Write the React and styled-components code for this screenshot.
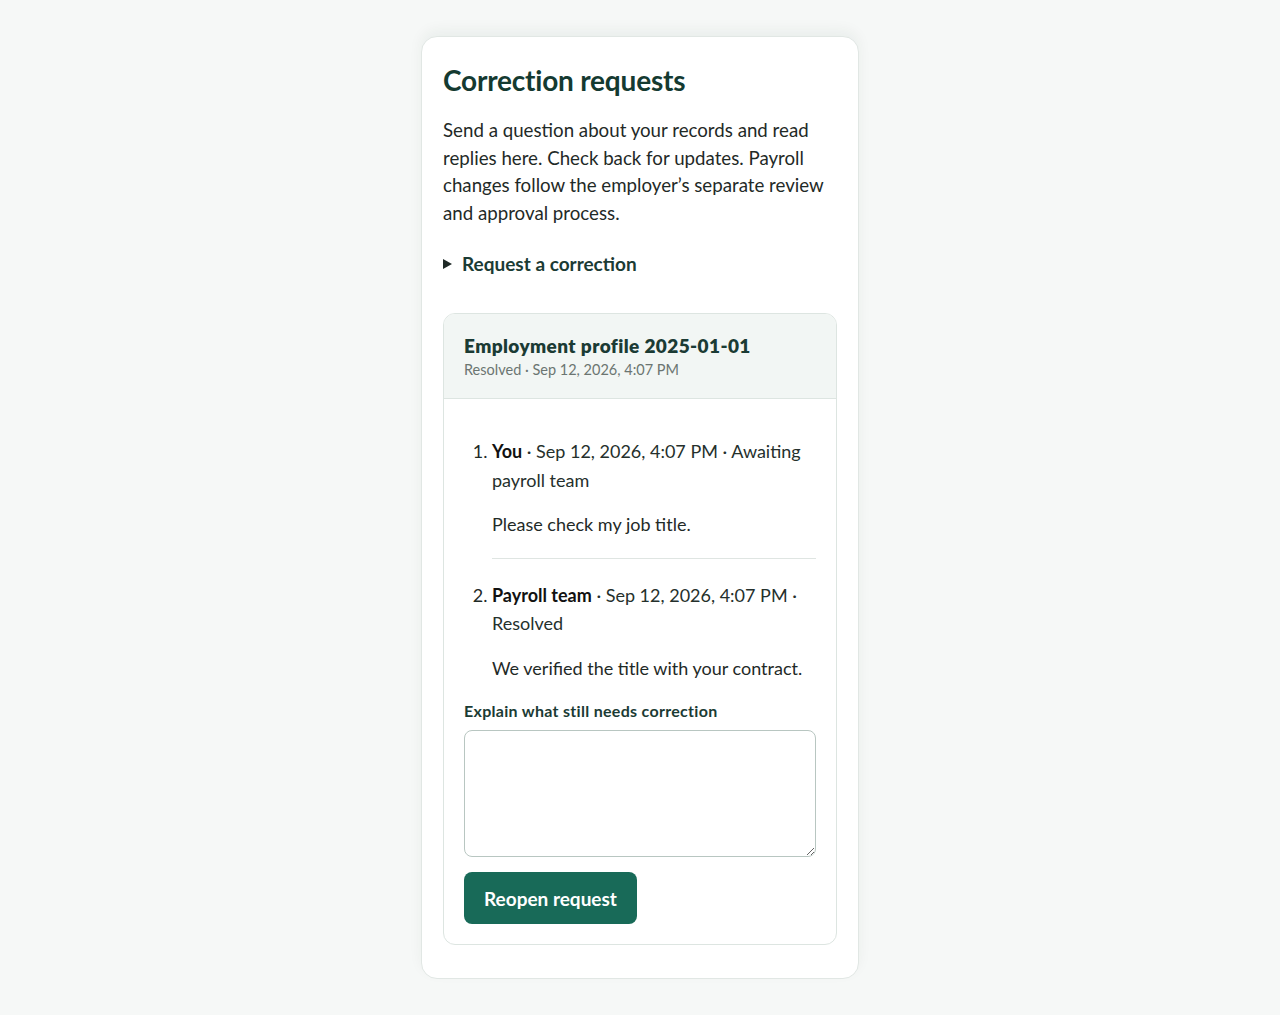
import React from 'react';
import styled, { createGlobalStyle } from 'styled-components';

const GlobalStyle = createGlobalStyle`
  html, body {
    margin: 0;
    padding: 0;
    background: #f6f8f7;
    font-family: Lato, "Noto Sans", sans-serif;
    color: #1f2a27;
  }
  * { box-sizing: border-box; }
`;

const Page = styled.main`
  min-height: 1015px;
  display: flex;
  justify-content: center;
  padding-top: 36px;
`;

const Panel = styled.section`
  width: 438px;
  align-self: flex-start;
  background: #fff;
  border: 1px solid #e1e7e4;
  border-radius: 16px;
  box-shadow: 0 -6px 14px rgba(20, 50, 40, 0.05);
  padding: 26px 21px 33px;
`;

const Title = styled.h1`
  margin: 0;
  font-size: 28px;
  line-height: 34px;
  font-weight: 700;
  color: #143a31;
  letter-spacing: -0.2px;
`;

const Intro = styled.p`
  margin: 20px 0 0;
  font-size: 18.7px;
  line-height: 27.5px;
`;

const Disclosure = styled.details`
  margin-top: 23px;
`;

const Summary = styled.summary`
  font-size: 19px;
  line-height: 27px;
  font-weight: 700;
  color: #1b3b34;
  cursor: pointer;
  list-style: none;
  display: flex;
  align-items: center;
  gap: 10px;
  &::-webkit-details-marker { display: none; }
  &::before {
    content: '';
    width: 0;
    height: 0;
    border-left: 9px solid #1f2a27;
    border-top: 5px solid transparent;
    border-bottom: 5px solid transparent;
  }
`;

const Thread = styled.article`
  margin-top: 36px;
  border: 1px solid #dde5e1;
  border-radius: 12px;
  overflow: hidden;
`;

const ThreadHead = styled.header`
  background: #f2f6f4;
  border-bottom: 1px solid #dde5e1;
  padding: 19px 20px 18px;
`;

const ThreadTitle = styled.h2`
  margin: 0;
  font-size: 19px;
  line-height: 25px;
  font-weight: 800;
  letter-spacing: 0.4px;
  color: #1b3b34;
`;

const ThreadMeta = styled.div`
  margin-top: 2px;
  font-size: 14.5px;
  line-height: 20px;
  color: #6b7571;
`;

const ThreadBody = styled.div`
  padding: 38px 20px 20px;
`;

const Messages = styled.ol`
  margin: 0;
  padding-left: 28px;
`;

const Message = styled.li`
  font-size: 18px;
  line-height: 28.5px;
  padding-bottom: 19px;
  & + & {
    border-top: 1px solid #dfe5e2;
    padding-top: 22px;
  }
  &:last-child { padding-bottom: 0; }
`;

const Meta = styled.div`
  color: #25302c;
  strong { color: #111; font-weight: 700; }
`;

const Text = styled.p`
  margin: 16px 0 0;
`;

const Form = styled.form`
  margin-top: 19px;
  display: flex;
  flex-direction: column;
  align-items: flex-start;
`;

const Label = styled.label`
  font-size: 16px;
  line-height: 20px;
  font-weight: 700;
  letter-spacing: 0.3px;
  color: #1b3b34;
  margin-bottom: 9px;
`;

const TextArea = styled.textarea`
  width: 100%;
  height: 127px;
  border: 1px solid #b8c6c1;
  border-radius: 8px;
  font: inherit;
  resize: vertical;
`;

const Button = styled.button`
  margin-top: 15px;
  height: 52px;
  padding: 0 20px;
  background: #186a58;
  color: #fff;
  border: none;
  border-radius: 8px;
  font-family: inherit;
  font-size: 19px;
  font-weight: 700;
  cursor: pointer;
`;

const messages = [
  { author: 'You', when: 'Sep 12, 2026, 4:07 PM', status: 'Awaiting payroll team', text: 'Please check my job title.' },
  { author: 'Payroll team', when: 'Sep 12, 2026, 4:07 PM', status: 'Resolved', text: 'We verified the title with your contract.' },
];

export default function App() {
  return (
    <Page>
      <GlobalStyle />
      <Panel>
        <Title>Correction requests</Title>
        <Intro>
          Send a question about your records and read replies here. Check back for updates. Payroll
          changes follow the employer’s separate review and approval process.
        </Intro>
        <Disclosure>
          <Summary>Request a correction</Summary>
        </Disclosure>
        <Thread>
          <ThreadHead>
            <ThreadTitle>Employment profile 2025-01-01</ThreadTitle>
            <ThreadMeta>Resolved · Sep 12, 2026, 4:07 PM</ThreadMeta>
          </ThreadHead>
          <ThreadBody>
            <Messages>
              {messages.map((m) => (
                <Message key={m.author}>
                  <Meta>
                    <strong>{m.author}</strong> · {m.when} · {m.status}
                  </Meta>
                  <Text>{m.text}</Text>
                </Message>
              ))}
            </Messages>
            <Form onSubmit={(e) => e.preventDefault()}>
              <Label htmlFor="reopen">Explain what still needs correction</Label>
              <TextArea id="reopen" />
              <Button type="submit">Reopen request</Button>
            </Form>
          </ThreadBody>
        </Thread>
      </Panel>
    </Page>
  );
}
